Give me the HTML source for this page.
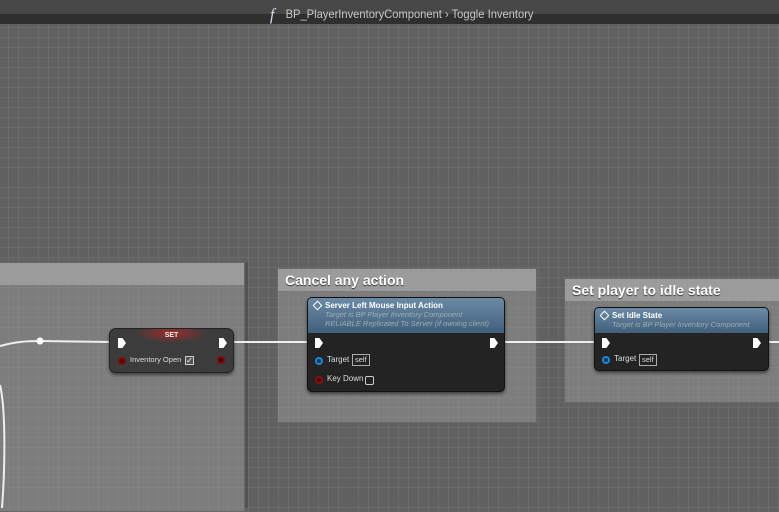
<!DOCTYPE html>
<html><head><meta charset="utf-8"><style>
*{margin:0;padding:0;box-sizing:border-box}
body{width:779px;height:508px;overflow:hidden;position:relative;font-family:"Liberation Sans",sans-serif;
background-color:#616161;
background-image:
linear-gradient(90deg,rgba(50,50,50,.2) 1px,transparent 1px),
linear-gradient(0deg,rgba(50,50,50,.2) 1px,transparent 1px),
linear-gradient(90deg,rgba(255,255,255,.06) 1px,transparent 1px),
linear-gradient(0deg,rgba(255,255,255,.06) 1px,transparent 1px);
background-size:160px 160px,160px 160px,10px 10px,10px 10px;
background-position:28px 18px,28px 18px,8px 8px,8px 8px;}
.top{position:absolute;left:0;top:0;width:779px;height:14px;background:#474747}
.strip{position:absolute;left:0;top:14px;width:779px;height:10px;background:#2f2f2f}
.title{position:absolute;top:3px;left:270px;color:#c8c8c8;font-size:12px;white-space:nowrap;transform:scaleX(.93);transform-origin:left}
.title i{font-family:"Liberation Serif",serif;font-size:17px;color:#dde;margin-right:12px;position:relative;top:2px}
.cm{position:absolute;background:rgba(150,150,150,.55);border:1px solid rgba(90,90,90,.6)}
.cm .h{position:absolute;left:0;right:0;top:0;height:22px;background:rgba(175,175,175,.6);color:#fff;font-weight:bold;font-size:14px;padding:3px 7px;text-shadow:0 1px 1px #333}
.node{position:absolute;background:#232323;border:1px solid #111;border-radius:5px;box-shadow:0 2px 3px rgba(0,0,0,.5);color:#ddd;font-size:8px}
.nh{background:linear-gradient(#6a8aa5,#3f5f7a);border-radius:4px 4px 0 0;padding:3px 6px 3px 17px;position:relative}
.nh b{color:#fff;font-size:8px}
.nh .s{color:#a8b8c0;font-style:italic;font-size:7.5px;line-height:9px;opacity:.85}
.dia{position:absolute;left:6px;top:4px;width:7px;height:7px;border:1.5px solid #fff;transform:rotate(45deg)}
.exec{position:absolute;width:8px;height:10px;background:#fff;clip-path:polygon(0 0,55% 0,100% 50%,55% 100%,0 100%)}
.pin{position:absolute;width:8px;height:8px;border-radius:50%;border:2px solid}
.box{position:absolute;border:1px solid #aaa;color:#ddd;font-size:7.5px;padding:0 2px;line-height:10px}
.lbl{position:absolute;font-size:8px;color:#ddd}
</style></head><body>
<div class="top"></div><div class="strip"></div>
<div class="title"><i>f</i>BP_PlayerInventoryComponent &#8250; Toggle Inventory</div>

<div class="cm" style="left:-2px;top:262px;width:247px;height:250px"><div class="h" style="height:22px"></div></div>
<div style="position:absolute;left:245px;top:262px;width:3px;height:246px;background:rgba(60,60,60,.4)"></div>
<div class="cm" style="left:277px;top:268px;width:260px;height:155px"><div class="h">Cancel any action</div></div>
<div class="cm" style="left:564px;top:278px;width:220px;height:125px"><div class="h">Set player to idle state</div></div>

<svg style="position:absolute;left:0;top:0" width="779" height="508">
<path d="M0 346 C15 342 25 341 40 341 L110 342" stroke="#eee" stroke-width="2" fill="none"/>
<circle cx="40" cy="341" r="3.5" fill="#fff"/>
<path d="M234 342 L307 342 M505 342 L594 342 M769 342 L779 342" stroke="#eee" stroke-width="2" fill="none"/>
<path d="M0 385 C6 410 5 470 2 508" stroke="#eee" stroke-width="2" fill="none"/>
</svg>

<div class="node" style="left:109px;top:328px;width:125px;height:45px;background:#3c3c3c;border-color:#222;border-radius:7px">
<div style="position:absolute;left:25px;right:25px;top:0;height:14px;background:radial-gradient(ellipse at 50% 30%,rgba(170,40,40,.9),transparent 70%)"></div>
<div style="position:absolute;left:0;right:0;top:3px;text-align:center;color:#eee;font-weight:bold;font-size:7px">SET</div>
<div class="exec" style="left:8px;top:9px"></div>
<div class="exec" style="left:109px;top:9px"></div>
<div class="pin" style="left:8px;top:28px;border-color:#7a0c0c;background:#500"></div>
<div class="lbl" style="left:20px;top:26px;font-size:7.5px">Inventory Open</div>
<div style="position:absolute;left:75px;top:27px;width:9px;height:9px;border:1px solid #ccc;background:#555;color:#fff;font-size:8px;line-height:8px;text-align:center">✓</div>
<div class="pin" style="left:107px;top:27px;border-color:#7a0c0c;background:#500"></div>
</div>

<div class="node" style="left:307px;top:297px;width:198px;height:95px">
<div class="nh" style="height:35px"><div class="dia"></div><b>Server Left Mouse Input Action</b>
<div class="s">Target is BP Player Inventory Component<br>RELIABLE Replicated To Server (if owning client)</div></div>
<div class="exec" style="left:7px;top:40px"></div>
<div class="exec" style="left:182px;top:40px"></div>
<div class="pin" style="left:7px;top:59px;border-color:#1a8ad0;background:#036"></div>
<div class="lbl" style="left:19px;top:57px">Target</div>
<div class="box" style="left:44px;top:56px">self</div>
<div class="pin" style="left:7px;top:78px;border-color:#8a1010;background:#400"></div>
<div class="lbl" style="left:19px;top:76px">Key Down</div>
<div style="position:absolute;left:57px;top:78px;width:9px;height:9px;border:1.5px solid #ccc;border-radius:2px"></div>
</div>

<div class="node" style="left:594px;top:307px;width:175px;height:64px">
<div class="nh" style="height:25px"><div class="dia"></div><b>Set Idle State</b>
<div class="s">Target is BP Player Inventory Component</div></div>
<div class="exec" style="left:7px;top:30px"></div>
<div class="exec" style="left:158px;top:30px"></div>
<div class="pin" style="left:7px;top:48px;border-color:#1a8ad0;background:#036"></div>
<div class="lbl" style="left:19px;top:46px">Target</div>
<div class="box" style="left:44px;top:46px">self</div>
</div>
</body></html>
